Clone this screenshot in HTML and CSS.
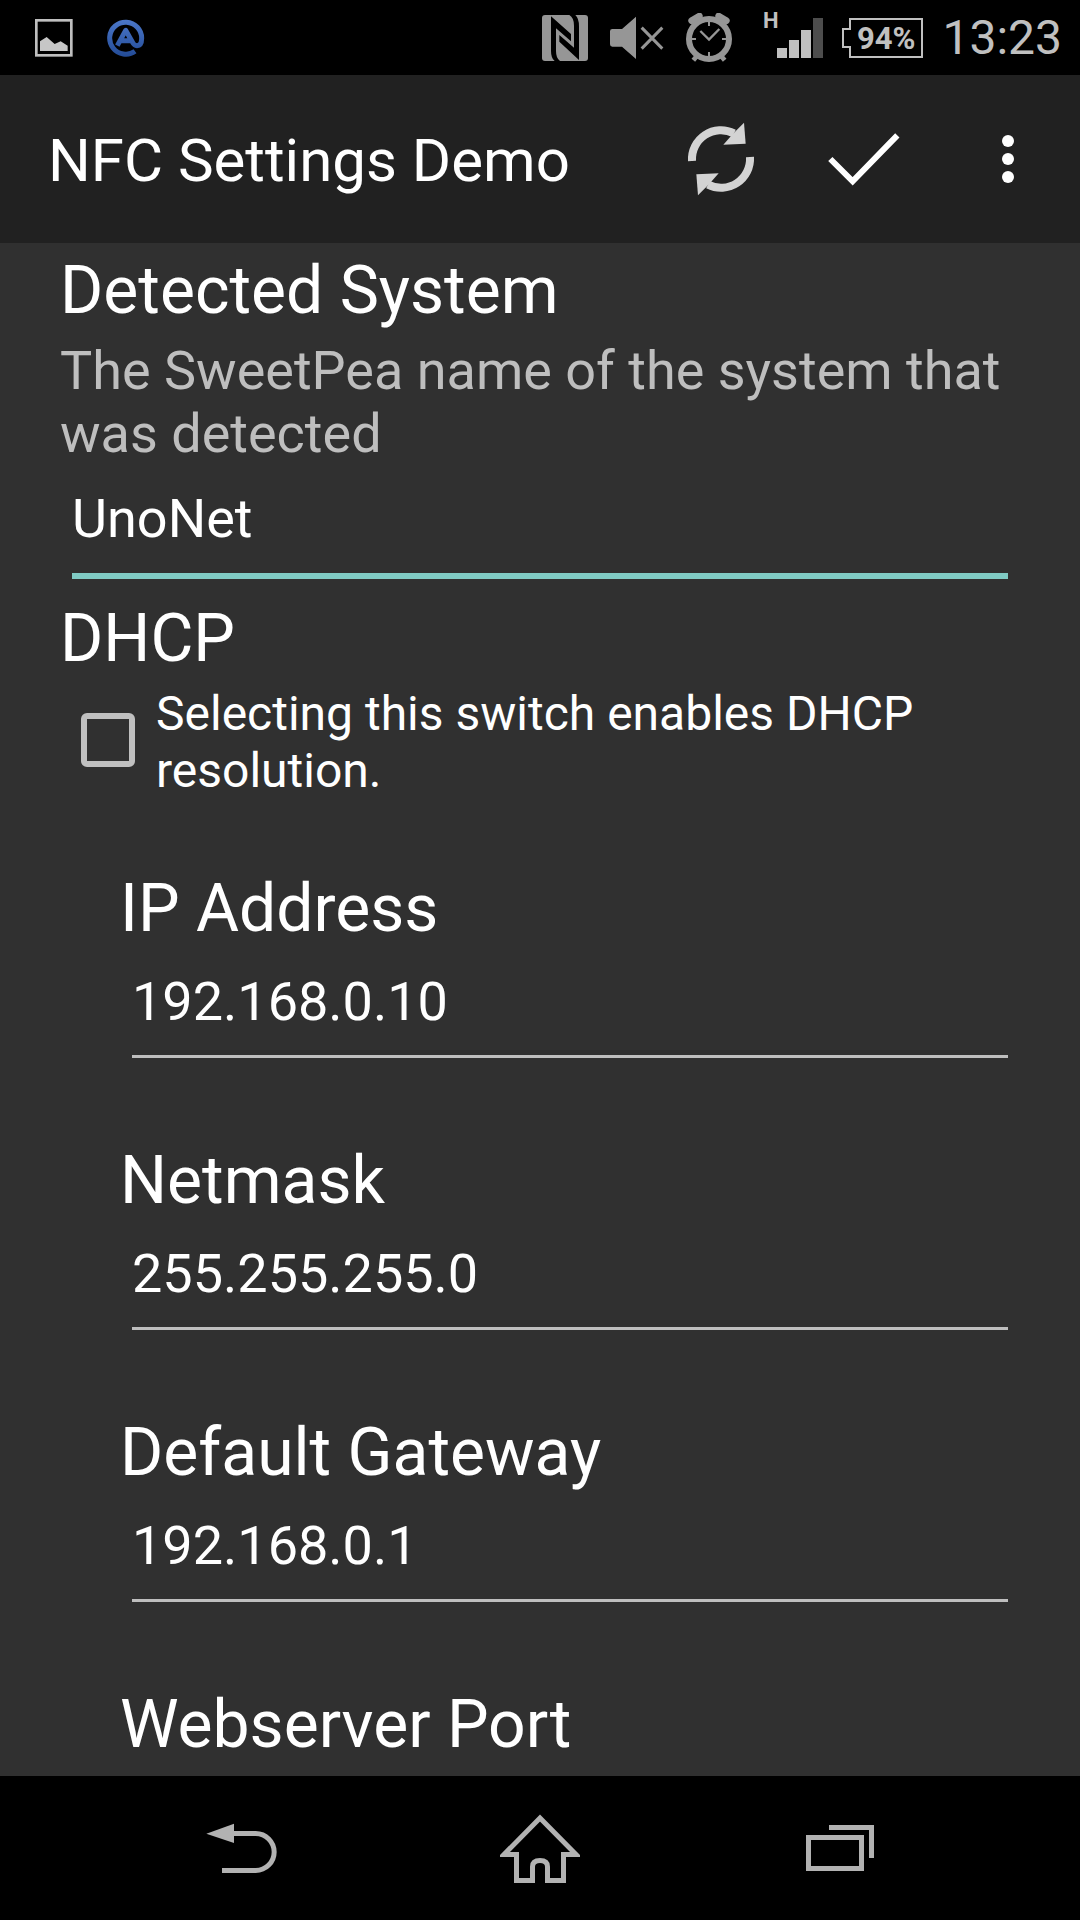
FILE: index.html
```html
<!DOCTYPE html>
<html lang="en">
<head>
<meta charset="utf-8">
<meta name="viewport" content="width=device-width, initial-scale=1">
<title>NFC Settings Demo</title>
<link rel="stylesheet" href="styles.css">
</head>
<body>
<div class="screen">
  <div class="status-bar">
    <div class="notifications">
      <svg width="38" height="38" viewBox="105 57 114 114" aria-hidden="true">
        <rect x="109" y="61" width="105" height="105" fill="none" stroke="#bfbfbf" stroke-width="8"/>
        <path d="M120 153V124L140 111L164 132L182 124L203 137V153Z" fill="#c6c6c6"/>
      </svg>
      <svg width="40" height="38" viewBox="318 61 120 114" aria-hidden="true">
        <defs><linearGradient id="blue" gradientUnits="userSpaceOnUse" x1="376" y1="64" x2="376" y2="174"><stop offset="0" stop-color="#4b77c9"/><stop offset="1" stop-color="#234b96"/></linearGradient></defs>
        <path d="M405 158C394 166 380 168 370 166A48 48 0 1 1 425 119C425 135 420 141 411 141C404 141 400 136 397 130L377 95L352 141M364 126H394" fill="none" stroke="url(#blue)" stroke-width="15" stroke-linejoin="round"/>
      </svg>
    </div>
    <div class="indicators">
      <svg width="46" height="46" viewBox="66 42 138 138" aria-hidden="true">
        <rect x="66" y="42" width="138" height="138" rx="9" fill="#969696"/>
        <path d="M93 46L153 99V121L108 82V150Q108 172 120 180H104Q93 172 93 150Z" fill="#000"/>
        <path d="M118 102L162 140V74Q162 50 148 42H166Q177 52 177 76V177L118 122Z" fill="#000"/>
      </svg>
      <svg width="54" height="46" viewBox="270 42 162 138" aria-hidden="true">
        <path d="M277 84H306L348 47V174L306 137H277Q270 137 270 130V91Q270 84 277 84Z" fill="#969696"/>
        <path d="M365 80L427 143M427 80L365 143" stroke="#969696" stroke-width="9"/>
      </svg>
      <svg width="46" height="50" viewBox="498 39 138 150" aria-hidden="true">
        <g fill="none" stroke="#969696">
          <circle cx="567" cy="117" r="60" stroke-width="18"/>
          <path d="M515 62L538 48M596 48L619 62" stroke-width="20" stroke-linecap="round"/>
          <path d="M530 169L520 181M604 169L614 181" stroke-width="14"/>
          <path d="M567 63V78M567 156V171M513 117H528M606 117H621" stroke-width="6"/>
          <path d="M541 93L567 119L598 87" stroke-width="7"/>
        </g>
      </svg>
      <svg class="signal" width="62" height="50" viewBox="762 9 62 50" role="img" aria-label="H signal">
        <text x="763" y="28" class="network">H</text>
        <path d="M777 48h10v10h-10zM789 40h10v18h-10zM801 30h10v28h-10z" fill="#c0c0c0"/>
        <path d="M813 18h10v40h-10z" fill="#4d4d4d"/>
      </svg>
      <svg class="battery" width="82" height="42" viewBox="841 16 82 42" role="img" aria-label="Battery 94%">
        <path d="M849 18H921V56H849V46H842V28H849Z" fill="none" stroke="#c0c0c0" stroke-width="2"/>
        <text x="856" y="48" class="percent">94%</text>
      </svg>
      <time class="clock">13:23</time>
    </div>
  </div>

  <header class="action-bar">
    <h1>NFC Settings Demo</h1>
    <button class="action" type="button" aria-label="Refresh">
      <svg width="80" height="80" viewBox="60 57 240 240" aria-hidden="true">
        <g fill="#d3d3d3" stroke="none">
          <path d="M96 183A87 87 0 0 1 222 100" fill="none" stroke="#d3d3d3" stroke-width="24"/>
          <path d="M252 68L257 131L190 134L213 108L228 92Z"/>
          <path d="M270 171A87 87 0 0 1 144 254" fill="none" stroke="#d3d3d3" stroke-width="24"/>
          <path d="M114 286L109 223L176 220L153 246L138 262Z"/>
        </g>
      </svg>
    </button>
    <button class="action" type="button" aria-label="Accept">
      <svg width="80" height="80" viewBox="492 57 240 240" aria-hidden="true">
        <path d="M511 177L578 244L712 106" fill="none" stroke="#fff" stroke-width="18"/>
      </svg>
    </button>
    <button class="action" type="button" aria-label="More options">
      <svg width="80" height="80" viewBox="924 57 240 240" aria-hidden="true">
        <g fill="#fff"><circle cx="1044" cy="123" r="18"/><circle cx="1044" cy="177" r="18"/><circle cx="1044" cy="231" r="18"/></g>
      </svg>
    </button>
  </header>

  <main class="settings">
    <h2><label for="system">Detected System</label></h2>
    <p class="summary">The SweetPea name of the system that was detected</p>
    <input class="field active" id="system" type="text" value="UnoNet">

    <h2 class="dhcp-title">DHCP</h2>
    <div class="check-row">
      <input class="check" id="dhcp" type="checkbox">
      <label for="dhcp">Selecting this switch enables DHCP resolution.</label>
    </div>

    <div class="addresses">
      <div class="group">
        <h2><label for="ip">IP Address</label></h2>
        <input class="field" id="ip" type="text" value="192.168.0.10">
      </div>
      <div class="group">
        <h2><label for="netmask">Netmask</label></h2>
        <input class="field" id="netmask" type="text" value="255.255.255.0">
      </div>
      <div class="group">
        <h2><label for="gateway">Default Gateway</label></h2>
        <input class="field" id="gateway" type="text" value="192.168.0.1">
      </div>
      <div class="group">
        <h2>Webserver Port</h2>
      </div>
    </div>
  </main>

  <nav class="nav-bar">
    <button type="button" aria-label="Back">
      <svg width="80" height="80" viewBox="60 144 240 240" aria-hidden="true">
        <path d="M79 221L162 191V249Z" fill="#b2b2b2"/>
        <path d="M160 220.500H227A55.500 55.500 0 0 1 227 331.500H126" fill="none" stroke="#b2b2b2" stroke-width="15"/>
      </svg>
    </button>
    <button type="button" aria-label="Home">
      <svg width="80" height="80" viewBox="960 144 240 240" aria-hidden="true">
        <path d="M1009.500 361.500V283.500H972L1080 174L1188 283.500H1150.500V361.500H1102.500V320Q1102.500 301.500 1080 301.500Q1057.500 301.500 1057.500 320V361.500Z" fill="none" stroke="#b2b2b2" stroke-width="15"/>
      </svg>
    </button>
    <button type="button" aria-label="Recent apps">
      <svg width="80" height="80" viewBox="120 144 240 240" aria-hidden="true">
        <path d="M145.500 232.500H304.500V325.500H145.500ZM207 202.500H334.500V294" fill="none" stroke="#b2b2b2" stroke-width="15"/>
      </svg>
    </button>
  </nav>
</div>
</body>
</html>
```

FILE: styles.css
```css
* {
  box-sizing: border-box;
}

body {
  margin: 0;
  background: #303030;
  color: #fff;
  font-family: Roboto, "Noto Sans", sans-serif;
}

h1,
h2,
p {
  margin: 0;
  font-weight: 400;
}

svg {
  display: block;
  flex: none;
}

button {
  display: flex;
  align-items: center;
  justify-content: center;
  padding: 0;
  border: 0;
  background: none;
}

.screen {
  display: flex;
  flex-direction: column;
  min-height: 100vh;
}

.status-bar {
  display: flex;
  align-items: center;
  justify-content: space-between;
  height: 75px;
  padding: 0 18px 0 35px;
  background: #000;
}

.notifications {
  display: flex;
  align-items: center;
  gap: 33px;
}

.indicators {
  display: flex;
  align-items: center;
  gap: 22px;
}

.signal {
  margin-left: 8px;
  margin-bottom: 8px;
}

.battery {
  margin: 0 -4px;
}

.network {
  fill: #c0c0c0;
  font-size: 22px;
  font-weight: 700;
}

.percent {
  fill: #c0c0c0;
  font-size: 31px;
  font-weight: 700;
}

.clock {
  color: #c0c0c0;
  font-size: 48px;
  line-height: 57px;
}

.action-bar {
  display: flex;
  align-items: center;
  height: 168px;
  padding-left: 48px;
  background: #212121;
}

.action-bar h1 {
  flex: 1;
  padding-top: 4px;
  font-size: 60px;
  line-height: 70px;
  white-space: nowrap;
}

.action {
  width: 144px;
  height: 100%;
}

.settings {
  flex: 1;
  padding: 9px 60px 12px;
}

h2 {
  font-size: 66px;
  line-height: 78px;
}

.summary {
  margin-top: 9px;
  color: #bebebe;
  font-size: 54px;
  line-height: 63px;
}

.field {
  display: block;
  width: calc(100% - 24px);
  height: 89px;
  margin: 21px 12px 0;
  padding: 0 0 22px;
  border: 0;
  border-bottom: 3px solid #bebebe;
  border-radius: 0;
  outline: 0;
  background: none;
  color: #fff;
  font: 54px/64px Roboto, "Noto Sans", sans-serif;
}

.field.active {
  height: 93px;
  border-bottom: 6px solid #80cbc4;
}

.dhcp-title {
  margin-top: 21px;
}

.check-row {
  display: flex;
  align-items: flex-start;
  gap: 21px;
  margin-top: 7px;
  padding-left: 21px;
  font-size: 48px;
  line-height: 57px;
}

.check {
  flex: none;
  width: 54px;
  height: 54px;
  margin: 28px 0 0;
  border: 6px solid #c0c0c0;
  border-radius: 6px;
  appearance: none;
}

.check:checked {
  background: #80cbc4;
}

.addresses {
  display: flex;
  flex-direction: column;
  gap: 84px;
  margin-top: 71px;
  padding-left: 60px;
}

.nav-bar {
  display: flex;
  height: 144px;
  padding: 0 90px;
  background: #000;
}

.nav-bar button {
  flex: 1;
}
```
